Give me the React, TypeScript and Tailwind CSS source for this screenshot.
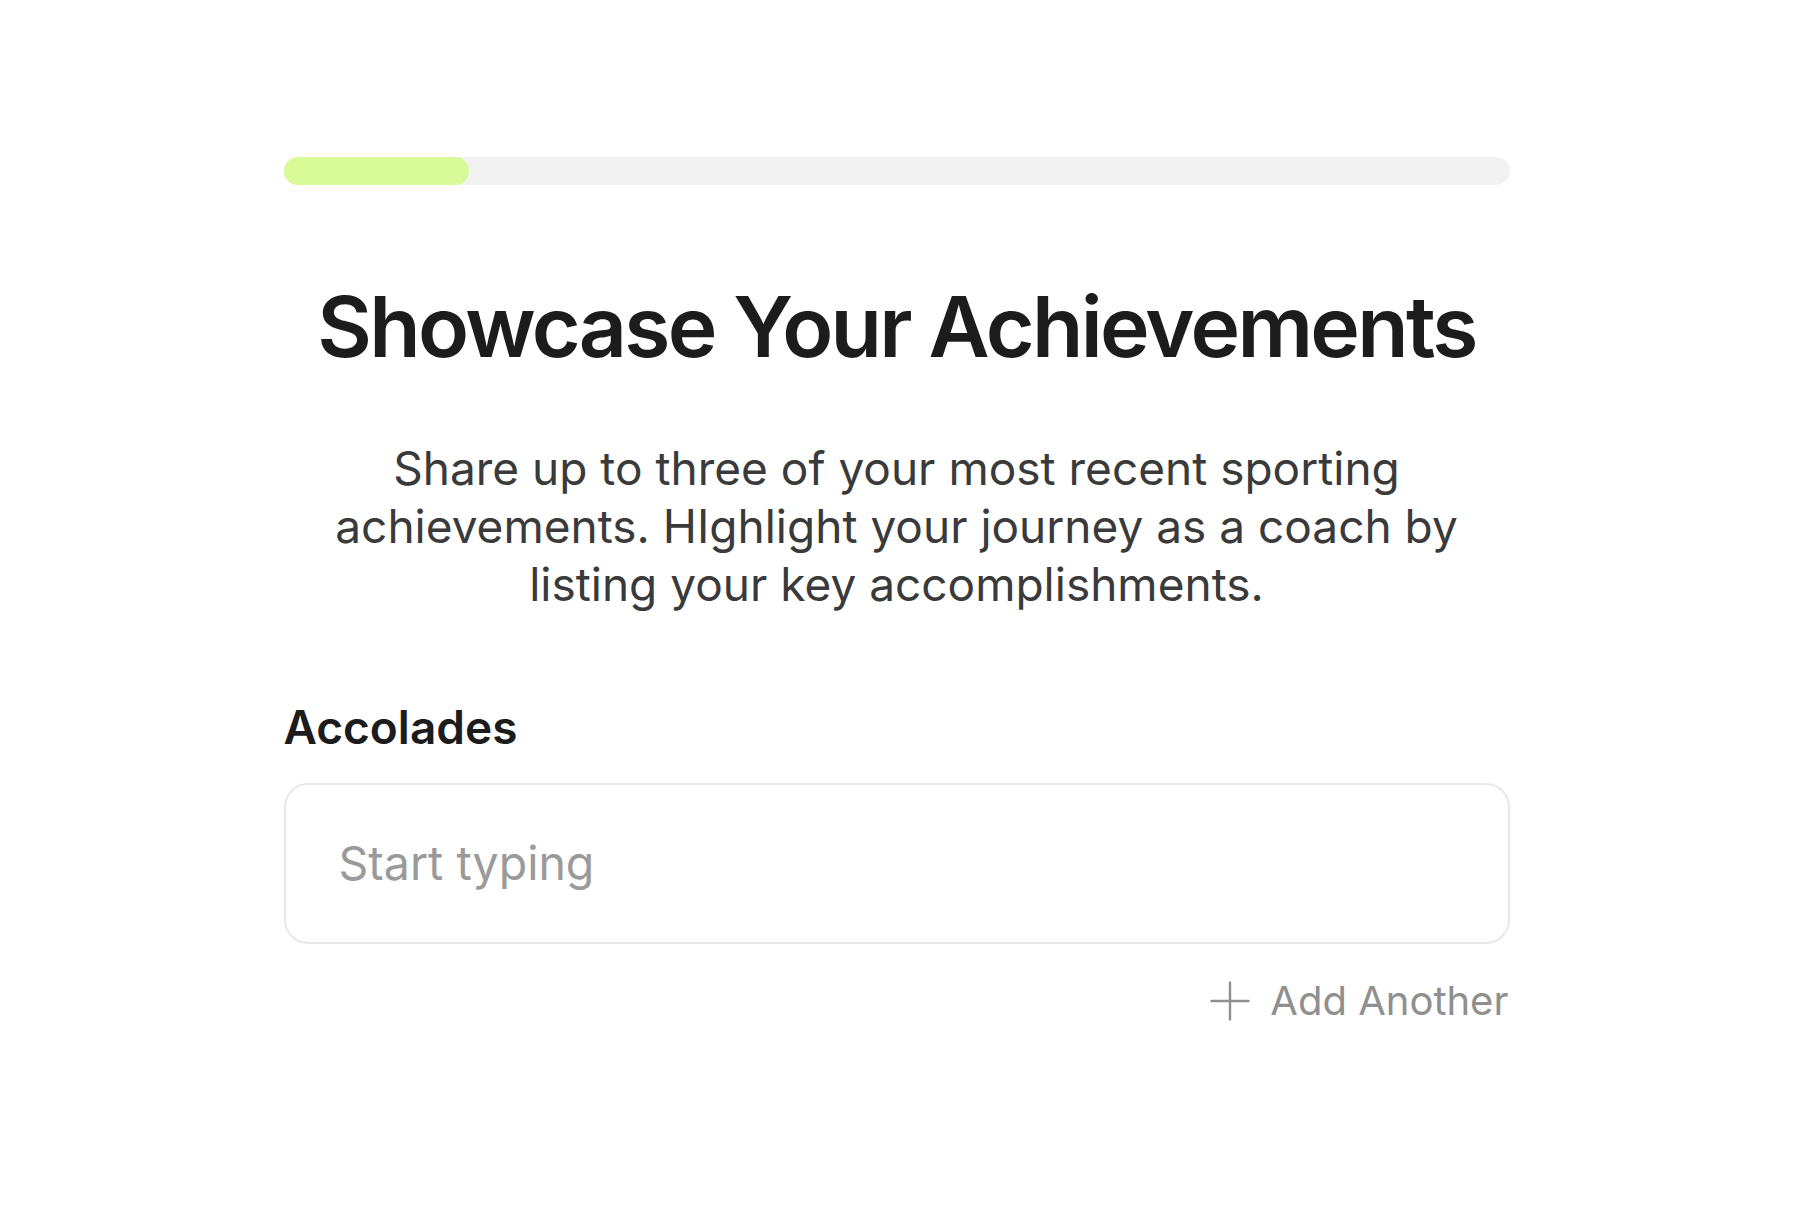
import * as React from "react";

function PlusIcon() {
  return (
    <svg width="40" height="40" viewBox="0 0 40 40" fill="none" stroke="currentColor" strokeWidth="2.4" strokeLinecap="round">
      <path d="M20 1.5v37M1.5 20h37" />
    </svg>
  );
}

export default function App() {
  return (
    <div
      className="min-h-screen w-full bg-white flex justify-center"
      style={{ fontFamily: "Inter, 'Noto Sans', sans-serif" }}
    >
      <div className="w-[1226px] pt-[157px] flex flex-col">
        {/* progress */}
        <div className="h-[28px] w-full rounded-full bg-[#f2f2f2] flex">
          <div className="h-full w-[185px] rounded-full bg-[#d8fb97]" />
        </div>

        <h1 className="mt-[92px] text-center text-[84px] leading-[100px] font-semibold tracking-[-0.032em] text-[#1c1c1c]">
          Showcase Your Achievements
        </h1>

        <p className="mt-[62px] mx-auto max-w-[1150px] text-center text-[46px] leading-[58px] text-[#3a3a3a]">
          Share up to three of your most recent sporting achievements. HIghlight
          your journey as a coach by listing your key accomplishments.
        </p>

        <label className="mt-[88px] text-[46px] leading-[52px] font-semibold text-[#1c1c1c]">
          Accolades
        </label>

        <div className="mt-[30px] h-[161px] w-full rounded-[24px] border-2 border-[#e8e8e8] flex items-center pl-[53px]">
          <span className="text-[46.5px] text-[#9a9a9a]">Start typing</span>
        </div>

        <div className="mt-[33px] flex justify-end items-center gap-[20px] pr-[1px] text-[#8f8f8f]">
          <PlusIcon />
          <span className="text-[40px] leading-[48px]">Add Another</span>
        </div>
      </div>
    </div>
  );
}
